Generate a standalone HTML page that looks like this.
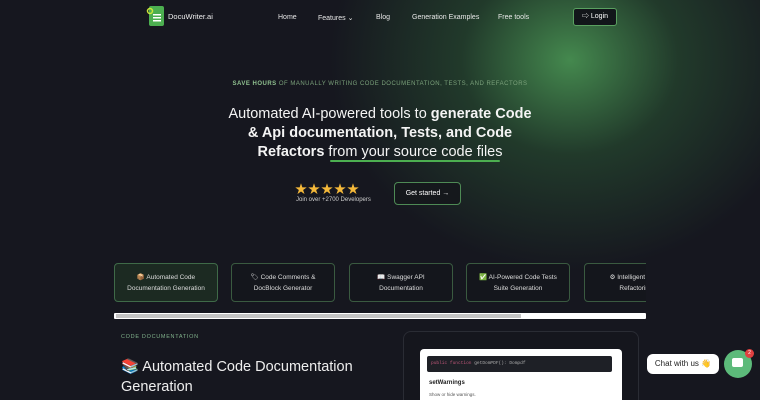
<!DOCTYPE html>
<html><head><meta charset="utf-8"><style>
*{margin:0;padding:0;box-sizing:border-box}
html,body{width:760px;height:400px;overflow:hidden}
body{background:#16171f;font-family:"Liberation Sans","Noto Sans CJK SC",sans-serif;color:#fff;position:relative}
.glow{position:absolute;left:0;top:0;width:760px;height:330px;background:radial-gradient(ellipse 240px 210px at 570px 60px,rgba(80,165,90,.8),rgba(50,110,60,.4) 45%,rgba(22,23,31,0) 100%)}
.abs{position:absolute}
.nav{font-size:7px;color:#e8e8e8;top:14px}
.card{position:absolute;top:263px;width:104px;height:39px;border:1px solid #3a5a40;border-radius:4px;background:#14161c;font-size:6.5px;color:#ddd;text-align:center;line-height:11px;padding-top:8px}
.clip{position:absolute;left:0;top:0;width:646px;height:400px;overflow:hidden}
</style></head><body>
<div class="glow"></div>
<svg class="abs" style="left:144px;top:5px" width="22" height="22"><rect x="5" y="1" width="15" height="20" rx="2" fill="#4caf50"/><rect x="9" y="9" width="8" height="1.5" fill="#fff"/><rect x="9" y="12" width="8" height="1.5" fill="#fff"/><rect x="9" y="15" width="8" height="1.5" fill="#fff"/><circle cx="6" cy="6" r="2.5" fill="none" stroke="#cde63a" stroke-width="1.5"/></svg>
<div class="abs" style="left:168px;top:12px;font-size:7.5px;color:#eee">DocuWriter.ai</div>
<div class="abs nav" style="left:278px">Home</div>
<div class="abs nav" style="left:318px">Features &#8964;</div>
<div class="abs nav" style="left:376px">Blog</div>
<div class="abs nav" style="left:412px">Generation Examples</div>
<div class="abs nav" style="left:498px">Free tools</div>
<div class="abs" style="left:573px;top:8px;width:44px;height:18px;border:1px solid #5aa060;border-radius:3px;background:#12161a;font-size:7px;text-align:center;line-height:16px">&#8680; Login</div>
<div class="abs" style="left:0;width:760px;top:81px;text-align:center;font-size:6px;letter-spacing:.5px;color:#8fc08f;font-weight:bold">SAVE HOURS <span style="color:#7aa07a;font-weight:normal">OF MANUALLY WRITING CODE DOCUMENTATION, TESTS, AND REFACTORS</span></div>
<div class="abs" style="left:0;width:760px;top:105px;text-align:center;font-size:14.5px;line-height:19px;color:#f4f4f4">Automated AI-powered tools to <b>generate Code</b><br><b>&amp; Api documentation, Tests, and Code</b><br><b>Refactors</b> from your source code files</div>
<div class="abs" style="left:330px;top:160px;width:170px;height:2px;background:#4caf50;border-radius:2px"></div>
<div class="abs" style="left:295px;top:180px;font-size:12px;color:#f5b93a;letter-spacing:1px">★★★★★</div>
<div class="abs" style="left:296px;top:197px;font-size:6px;color:#ccc">Join over +2700 Developers</div>
<div class="abs" style="left:394px;top:182px;width:67px;height:23px;border:1px solid #4e8a55;border-radius:4px;background:#15181c;font-size:7px;text-align:center;line-height:21px">Get started &rarr;</div>
<div class="clip">
<div class="card" style="left:114px;background:#1c2a22;border-color:#3f6a48">📦 Automated Code<br>Documentation Generation</div>
<div class="card" style="left:231px">🏷 Code Comments &amp;<br>DocBlock Generator</div>
<div class="card" style="left:349px">📖 Swagger API<br>Documentation</div>
<div class="card" style="left:466px">✅ AI-Powered Code Tests<br>Suite Generation</div>
<div class="card" style="left:584px">⚙ Intelligent Code<br>Refactoring</div>
</div>
<div class="abs" style="left:114px;top:313px;width:532px;height:6px;background:#fff;border-radius:1px"></div>
<div class="abs" style="left:116px;top:314px;width:405px;height:4px;background:#c4c4c4"></div>
<div class="abs" style="left:121px;top:334px;font-size:5.5px;letter-spacing:.7px;color:#7fb08a">CODE DOCUMENTATION</div>
<div class="abs" style="left:121px;top:357px;font-size:14.5px;line-height:20px;color:#eee">📚 Automated Code Documentation<br>Generation</div>
<div class="abs" style="left:403px;top:331px;width:236px;height:80px;border:1px solid #2a2c34;border-radius:8px;background:#15161d"></div>
<div class="abs" style="left:420px;top:349px;width:202px;height:60px;background:#fff;border-radius:4px"></div>
<div class="abs" style="left:427px;top:356px;width:185px;height:16px;background:#1e2026;border-radius:2px;font-family:'Liberation Mono',monospace;font-size:4.5px;color:#b57;line-height:16px;padding-left:4px">public function <span style="color:#aaa">getDomPDF(): Dompdf</span></div>
<div class="abs" style="left:429px;top:380px;font-size:6px;color:#222;font-weight:bold">setWarnings</div>
<div class="abs" style="left:429px;top:392px;font-size:4.5px;color:#555">Show or hide warnings.</div>
<div class="abs" style="left:647px;top:354px;width:72px;height:20px;background:#fff;border-radius:6px;color:#222;font-size:8px;text-align:center;line-height:20px">Chat with us 👋</div>
<div class="abs" style="left:724px;top:350px;width:28px;height:28px;border-radius:50%;background:#5cba7a"></div>
<div class="abs" style="left:732px;top:358px;width:11px;height:9px;background:#fff;border-radius:2px"></div>
<div class="abs" style="left:745px;top:349px;width:9px;height:9px;border-radius:50%;background:#e04040;font-size:5px;text-align:center;line-height:9px">2</div>
</body></html>
